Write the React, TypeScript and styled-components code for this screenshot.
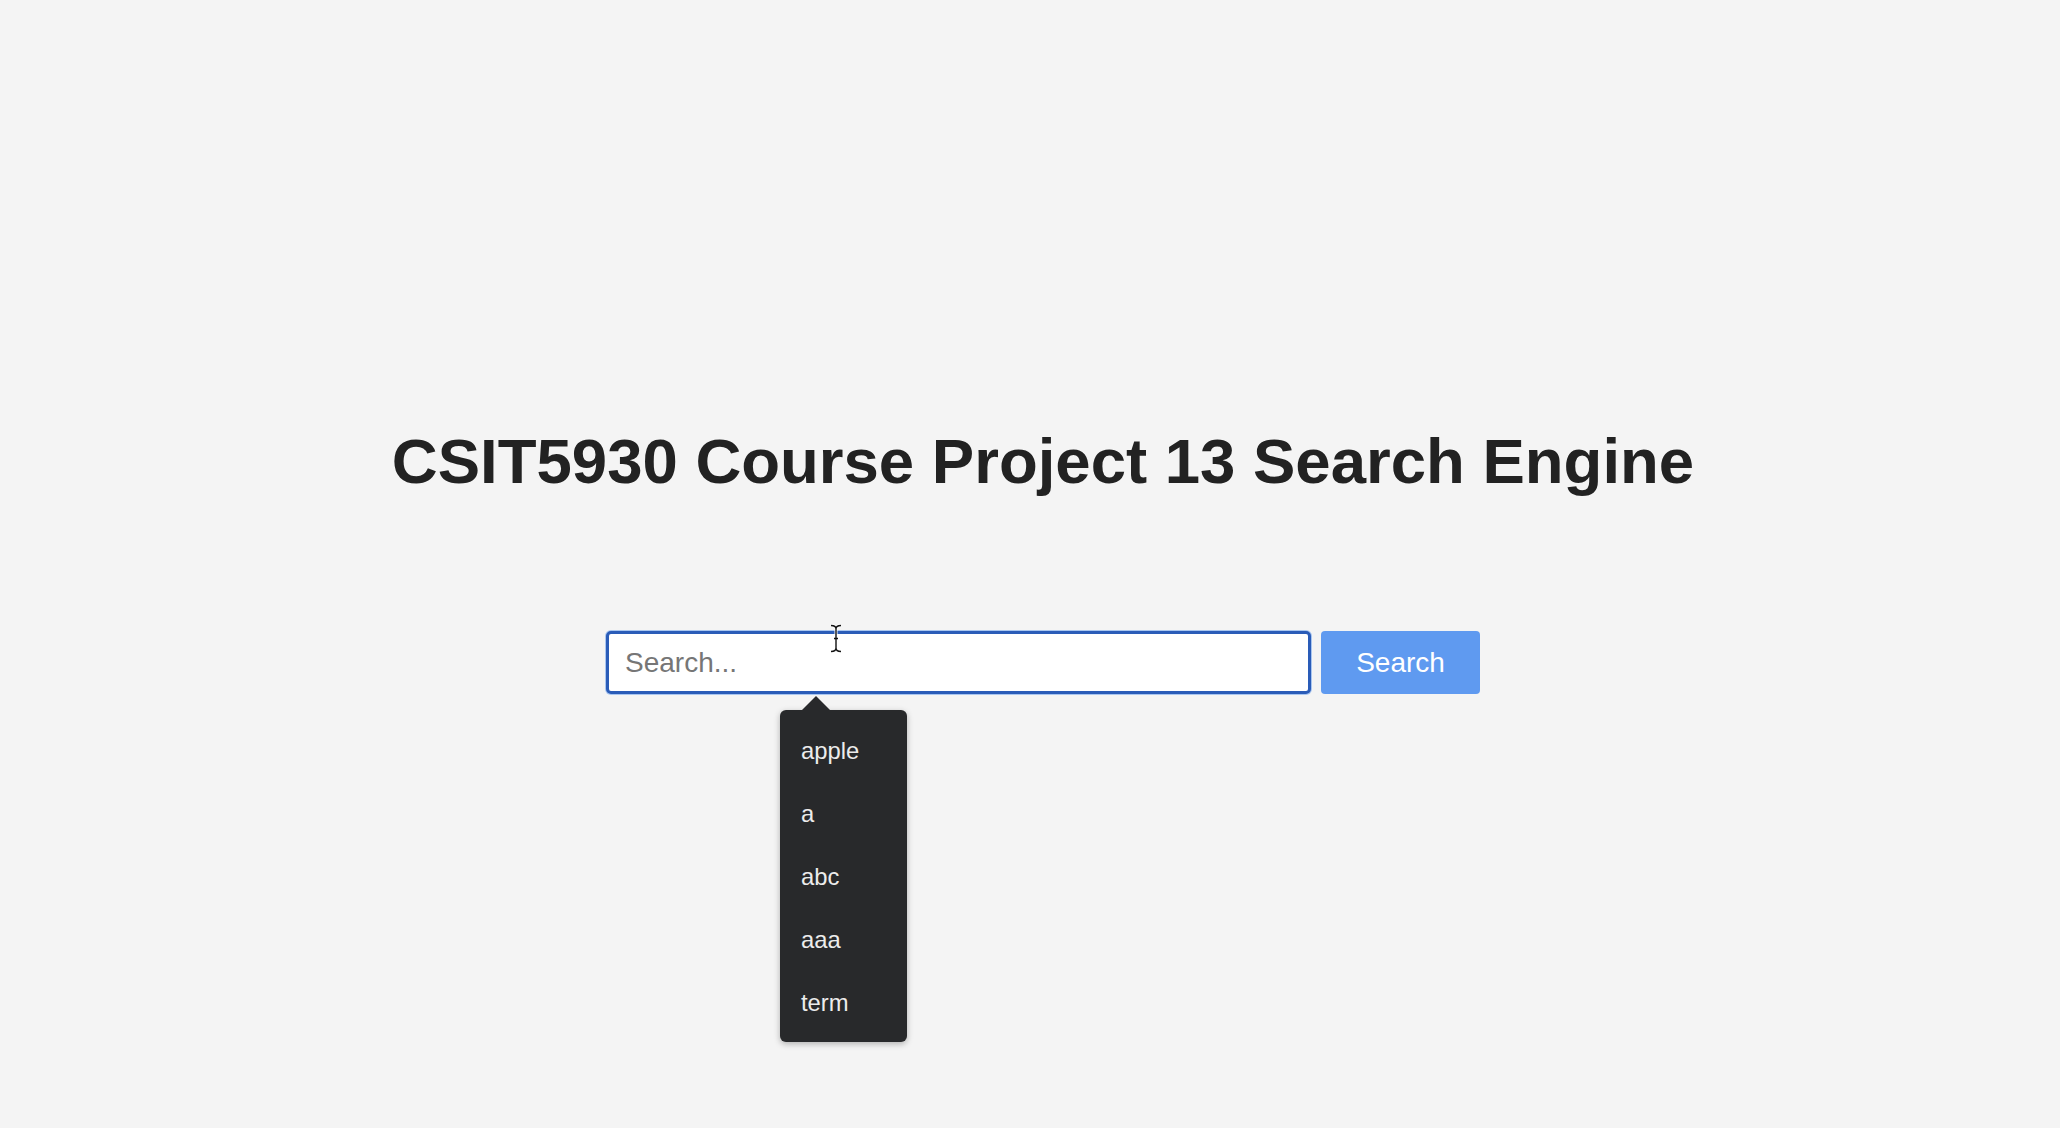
import React from "react";
import styled, { createGlobalStyle } from "styled-components";

const GlobalStyle = createGlobalStyle`
  html, body {
    margin: 0;
    padding: 0;
    background: #f4f4f4;
    font-family: "Liberation Sans", Arial, sans-serif;
  }
  * { box-sizing: border-box; }
`;

const Page = styled.main`
  min-height: 100vh;
  display: flex;
  flex-direction: column;
  align-items: center;
  padding: 425px 0 0 26px;
`;

const Title = styled.h1`
  margin: 0 0 133px;
  font-family: "Liberation Sans", Arial, sans-serif;
  font-weight: 700;
  font-size: 63.5px;
  line-height: 73px;
  color: #222222;
  white-space: nowrap;
`;

const SearchRow = styled.form`
  position: relative;
  display: flex;
  gap: 10px;
  margin: 0;
`;

const SearchInput = styled.input`
  width: 705px;
  height: 63px;
  padding: 0 16px;
  border: 3px solid #2a5cb8;
  border-radius: 5px;
  box-shadow: 0 0 0 1px #a9c6f0;
  outline: none;
  background: #ffffff;
  font-family: "Liberation Sans", Arial, sans-serif;
  font-size: 28px;
  color: #222;
  &::placeholder {
    color: #767676;
  }
`;

const SearchButton = styled.button`
  width: 159px;
  height: 63px;
  border: none;
  border-radius: 4px;
  background: #5f9af0;
  color: #ffffff;
  font-family: "Liberation Sans", Arial, sans-serif;
  font-size: 28px;
  cursor: pointer;
`;

const Suggestions = styled.ul`
  position: absolute;
  top: 79px;
  left: 174px;
  width: 127px;
  margin: 0;
  padding: 8.5px 0 7.5px;
  list-style: none;
  background: #28292b;
  border-radius: 6px;
  box-shadow: 0 2px 6px rgba(0, 0, 0, 0.28);
  &::before {
    content: "";
    position: absolute;
    top: -14px;
    left: 22px;
    border-left: 14px solid transparent;
    border-right: 14px solid transparent;
    border-bottom: 14px solid #28292b;
  }
`;

const Suggestion = styled.li`
  height: 63.2px;
  line-height: 63.2px;
  padding: 0 21px;
  font-family: "Liberation Sans", Arial, sans-serif;
  font-size: 23.8px;
  color: #ececec;
`;

const Cursor = styled.svg`
  position: absolute;
  left: 224px;
  top: -7px;
  pointer-events: none;
`;

const items = ["apple", "a", "abc", "aaa", "term"];

export default function App() {
  return (
    <>
      <GlobalStyle />
      <Page>
        <Title>CSIT5930 Course Project 13 Search Engine</Title>
        <SearchRow onSubmit={(e) => e.preventDefault()}>
          <SearchInput type="text" placeholder="Search..." />
          <SearchButton type="submit">Search</SearchButton>
          <Suggestions>
            {items.map((t) => (
              <Suggestion key={t}>{t}</Suggestion>
            ))}
          </Suggestions>
          <Cursor width="12" height="29" viewBox="0 0 12 29">
            <path
              d="M1 1.5 Q6 1.5 6 5 Q6 1.5 11 1.5 M6 5 V24 Q6 27.5 1 27.5 M6 24 Q6 27.5 11 27.5 M4 14.5 H8"
              fill="none"
              stroke="#ffffff"
              strokeWidth="3"
            />
            <path
              d="M1 1.5 Q6 1.5 6 5 Q6 1.5 11 1.5 M6 5 V24 Q6 27.5 1 27.5 M6 24 Q6 27.5 11 27.5 M4 14.5 H8"
              fill="none"
              stroke="#111111"
              strokeWidth="1.4"
            />
          </Cursor>
        </SearchRow>
      </Page>
    </>
  );
}
